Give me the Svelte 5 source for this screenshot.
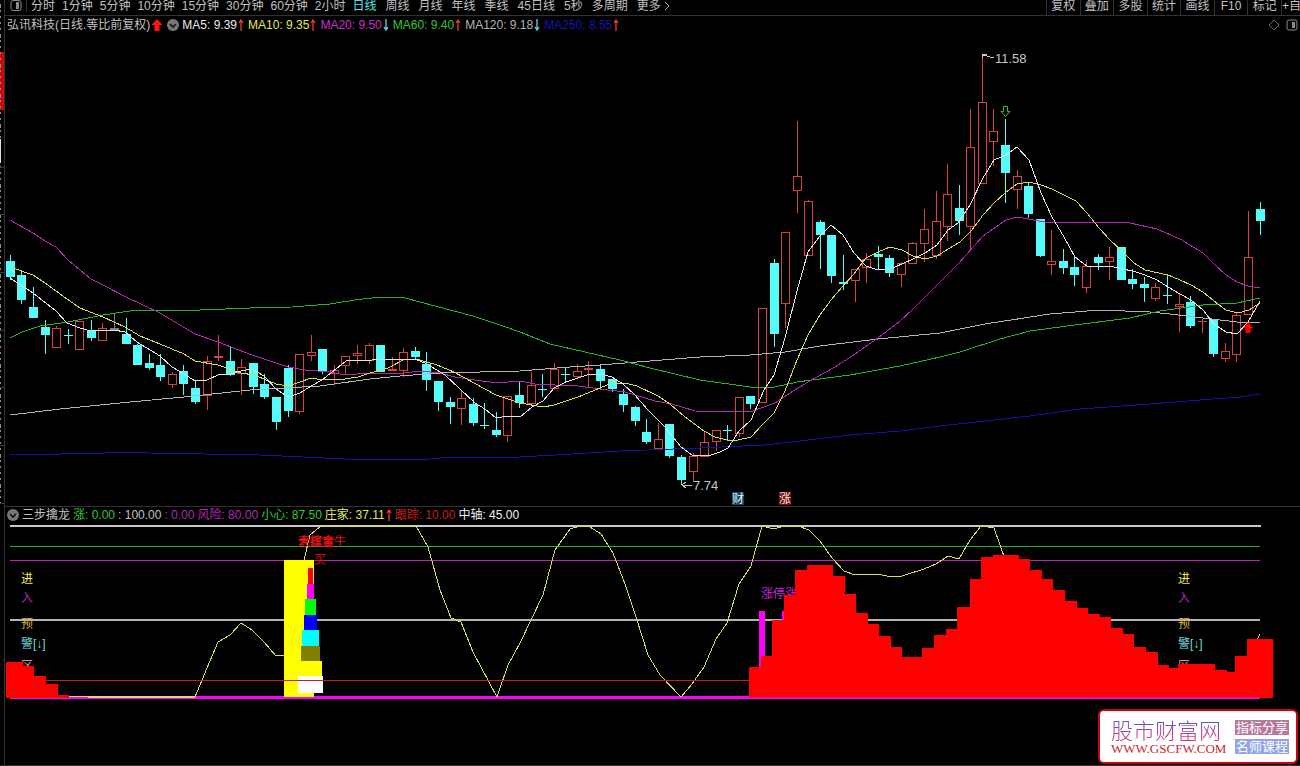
<script lang="ts">
  /** Daily K-line view with moving averages and the 三步擒龙 indicator below it.
   *  All chart values are in the drawing units of the two SVG panes. */

  type Candle = [kind: 'u' | 'd' | 'g', top: number, bottom: number, high: number, low: number];

  const intraday = ['分时', '1分钟', '5分钟', '10分钟', '15分钟', '30分钟', '60分钟', '2小时'];
  const longer = ['日线', '周线', '月线', '年线', '季线', '45日线', '5秒', '多周期', '更多'];
  const tools = ['复权', '叠加', '多股', '统计', '画线', 'F10', '标记', '+自'];

  let period = $state('日线');

  const averages = [
    { label: 'MA5', value: '9.39', color: '#e8e8e8', dir: 'up' },
    { label: 'MA10', value: '9.35', color: '#e6e65a', dir: 'up' },
    { label: 'MA20', value: '9.50', color: '#c832c8', dir: 'down' },
    { label: 'MA60', value: '9.40', color: '#32c832', dir: 'up' },
    { label: 'MA120', value: '9.18', color: '#b4b4b4', dir: 'down' },
    { label: 'MA250', value: '8.55', color: '#1414b4', dir: 'up' },
  ];

  const readings = [
    { text: '涨: 0.00', color: '#32c832', dir: '' },
    { text: ': 100.00', color: '#c0c0c0', dir: '' },
    { text: ': 0.00', color: '#b428b4', dir: '' },
    { text: '风险: 80.00', color: '#b428b4', dir: '' },
    { text: '小心: 87.50', color: '#32c832', dir: '' },
    { text: '庄家: 37.11', color: '#e6e65a', dir: 'up' },
    { text: '跟踪: 10.00', color: '#c81e1e', dir: '' },
    { text: '中轴: 45.00', color: '#f0f0f0', dir: '' },
  ];

  const candles: Candle[] = [
    ['d', 261, 277, 255, 280], ['d', 275, 300, 271, 304], ['d', 307, 318, 287, 318], ['d', 327, 335, 320, 354],
    ['u', 328, 348, 326, 348], ['d', 335, 336, 329, 344], ['u', 321, 350, 321, 350], ['d', 330, 338, 320, 341],
    ['u', 328, 341, 323, 341], ['g', 328, 330, 313, 330], ['d', 334, 344, 318, 344], ['d', 345, 365, 344, 365],
    ['d', 363, 368, 354, 370], ['d', 365, 377, 354, 381], ['u', 374, 385, 372, 388], ['d', 371, 384, 365, 395],
    ['d', 388, 402, 381, 404], ['u', 361, 396, 356, 410], ['u', 356, 358, 335, 361], ['d', 361, 375, 347, 376],
    ['u', 367, 374, 359, 395], ['d', 363, 387, 363, 394], ['d', 384, 397, 374, 399], ['d', 397, 422, 397, 430],
    ['d', 368, 411, 365, 417], ['u', 354, 412, 354, 414], ['u', 352, 356, 335, 361], ['d', 349, 372, 349, 374],
    ['u', 370, 374, 365, 385], ['u', 356, 366, 356, 375], ['u', 353, 356, 345, 364], ['u', 345, 361, 343, 364],
    ['d', 345, 372, 345, 372], ['u', 369, 371, 357, 371], ['u', 352, 371, 348, 377], ['d', 351, 357, 347, 360],
    ['d', 364, 380, 352, 391], ['d', 381, 402, 381, 411], ['d', 402, 407, 397, 424], ['u', 398, 409, 391, 425],
    ['d', 404, 423, 398, 426], ['d', 425, 426, 403, 429], ['d', 430, 435, 412, 437], ['u', 396, 436, 396, 442],
    ['d', 395, 403, 381, 408], ['u', 385, 404, 372, 406], ['d', 389, 390, 374, 397], ['u', 369, 389, 363, 390],
    ['d', 374, 375, 368, 382], ['u', 371, 377, 364, 379], ['u', 368, 370, 361, 387], ['d', 369, 381, 365, 389],
    ['d', 379, 389, 379, 392], ['d', 394, 405, 389, 412], ['d', 407, 421, 406, 426], ['d', 432, 442, 419, 444],
    ['u', 439, 449, 423, 449], ['d', 424, 456, 424, 458], ['d', 457, 480, 455, 485], ['u', 456, 472, 453, 482],
    ['u', 442, 457, 432, 457], ['u', 430, 442, 430, 451], ['d', 430, 431, 425, 441], ['u', 397, 434, 397, 437],
    ['d', 396, 404, 396, 409], ['u', 308, 403, 308, 403], ['d', 263, 334, 259, 347], ['u', 232, 304, 232, 328],
    ['u', 176, 191, 121, 213], ['u', 201, 256, 200, 256], ['d', 222, 235, 220, 269], ['d', 235, 276, 235, 283],
    ['d', 282, 284, 255, 290], ['u', 269, 281, 269, 302], ['u', 259, 268, 253, 283], ['d', 254, 257, 246, 269],
    ['d', 258, 273, 255, 277], ['u', 263, 275, 262, 287], ['u', 243, 264, 242, 264], ['u', 229, 244, 209, 262],
    ['u', 221, 256, 191, 259], ['u', 194, 227, 164, 241], ['d', 208, 221, 185, 235], ['u', 147, 227, 109, 251],
    ['u', 102, 184, 55, 184], ['u', 131, 142, 109, 166], ['d', 145, 173, 119, 203], ['u', 176, 190, 170, 209],
    ['d', 186, 214, 182, 218], ['d', 219, 256, 219, 257], ['u', 261, 265, 230, 275], ['d', 261, 268, 249, 274],
    ['d', 267, 275, 256, 286], ['u', 266, 288, 260, 293], ['d', 257, 263, 254, 270], ['u', 257, 262, 247, 280],
    ['d', 247, 280, 247, 280], ['d', 279, 284, 269, 289], ['d', 284, 288, 277, 302], ['u', 287, 299, 283, 301],
    ['d', 295, 296, 274, 304], ['u', 304, 307, 294, 332], ['d', 302, 326, 296, 328], ['u', 321, 322, 319, 333],
    ['d', 319, 354, 319, 357], ['u', 351, 359, 343, 362], ['u', 315, 355, 313, 362], ['u', 257, 315, 211, 315],
    ['d', 209, 221, 202, 235],
  ];

  const colX = (i: number) => Math.floor(10.3 + 11.572 * i);

  const lines = [
    { color: '#1010b0', pts: '10,454 60,454 105,453 125,452 150,453 260,455 325,458 345,459 430,459 440,458 520,457 555,455 620,451 700,448 765,445 800,441 850,435 900,431 940,426 985,421 1030,416 1080,409 1150,404 1200,400 1240,397 1260,394' },
    { color: '#b4b4b4', pts: '10,415 60,409 130,402 184,397 250,390 320,386 370,379 400,376 440,373 520,371 570,367 600,365 650,361 700,357 750,355 785,352 820,346 878,339 940,333 985,324 1050,314 1100,310 1150,312 1170,314 1203,318 1237,322 1260,323' },
    { color: '#28b428', pts: '10,338 22,332 40,326 68,322 103,315 130,311 150,310 200,310 250,308 292,307 330,304 355,300 380,297 405,298 435,306 473,316 500,325 520,332 550,344 585,352 620,360 650,368 700,380 750,387 775,387 797,382 850,375 900,366 940,357 960,352 1000,339 1030,331 1075,325 1130,318 1160,311 1203,305 1237,303 1260,298' },
    { color: '#b428b4', pts: '10,220 33,233 45,241 56,247 68,260 80,270 91,279 103,285 126,297 160,313 195,334 218,342 252,355 288,367 305,370 330,372 345,375 370,373 395,374 420,371 440,373 455,377 475,380 497,383 520,381 535,384 555,385 578,386 600,389 625,392 655,401 672,404 695,411 750,412 775,403 790,393 808,382 835,367 855,354 878,338 900,321 913,309 930,292 958,264 983,236 1006,220 1017,217 1045,222 1075,222 1130,223 1157,229 1180,239 1203,253 1214,264 1226,275 1237,282 1248,286 1260,288' },
    { color: '#dcdc50', pts: '10,267 33,275 45,283 67,299 80,308 103,317 125,327 140,336 160,344 184,354 195,361 218,365 241,373 254,375 264,379 276,384 288,386 300,382 311,378 323,380 345,379 358,377 370,373 388,368 405,359 420,360 437,365 454,372 474,383 496,395 520,403 543,407 554,405 578,397 600,388 612,383 625,383 637,386 658,396 670,404 685,417 704,431 715,437 727,440 738,440 751,437 762,425 774,413 785,391 797,360 808,335 820,315 831,300 843,286 854,274 866,258 878,252 890,247 902,250 913,256 925,259 937,256 948,249 960,242 972,230 983,215 994,203 1006,192 1017,184 1029,182 1041,185 1052,189 1064,195 1076,201 1087,213 1099,228 1110,240 1122,251 1134,263 1145,270 1168,275 1180,280 1191,285 1203,292 1214,301 1226,310 1238,313 1249,310 1260,303' },
    { color: '#e6e6e6', pts: '10,278 33,293 56,311 67,323 80,328 91,331 103,330 114,330 125,332 137,342 160,356 172,367 184,374 195,381 207,380 218,375 230,374 241,371 252,369 264,376 276,389 288,397 300,393 311,386 322,380 346,361 372,360 405,359 415,359 427,364 445,375 460,389 475,403 485,409 496,418 508,416 520,417 532,407 543,401 554,388 566,382 578,378 590,374 601,374 612,377 623,384 634,394 648,410 665,427 681,447 692,455 708,456 720,452 728,448 739,431 751,420 764,390 774,375 785,338 797,291 808,252 820,236 831,225 843,235 854,253 866,266 878,270 890,269 902,264 913,259 925,253 937,245 948,230 958,223 970,205 983,178 994,160 1006,155 1017,147 1029,160 1041,193 1052,217 1064,237 1075,257 1087,266 1100,267 1110,266 1122,269 1133,271 1145,275 1157,280 1168,287 1180,294 1191,300 1203,310 1214,324 1226,332 1237,334 1248,322 1260,301' },
  ];

  const base = 698;

  // [right edge, top] of every step
  const leftSteps = [[23, 662], [34, 666], [46, 676], [58, 684], [69, 695]];
  const rightSteps = [
    [761, 667], [772, 656], [784, 620], [795, 595], [807, 570], [833, 565], [845, 576], [856, 594], [868, 613],
    [879, 624], [891, 636], [902, 647], [922, 657], [934, 648], [946, 635], [957, 629], [970, 607], [981, 579],
    [993, 557], [1019, 555], [1030, 559], [1042, 570], [1053, 579], [1065, 590], [1077, 601], [1088, 608],
    [1100, 614], [1111, 617], [1123, 628], [1134, 634], [1146, 647], [1158, 652], [1169, 665], [1178, 668],
    [1215, 664], [1227, 670], [1235, 672], [1247, 656], [1273, 639],
  ];

  function stepPath(start: number, steps: number[][]): string {
    let d = `M${start} ${base}`;
    for (const [x, y] of steps) d += `V${y}H${x}`;
    return d + `V${base}Z`;
  }

  const tower = [
    { x: 308, y: 568, w: 5, h: 16, color: '#ff0000' },
    { x: 307, y: 584, w: 7, h: 15, color: '#ff00ff' },
    { x: 305, y: 599, w: 11, h: 16, color: '#00ff00' },
    { x: 304, y: 615, w: 13, h: 15, color: '#0000ff' },
    { x: 302, y: 630, w: 17, h: 16, color: '#00ffff' },
    { x: 301, y: 646, w: 19, h: 15, color: '#808000' },
    { x: 302, y: 661, w: 20, h: 15, color: '#ffff00' },
    { x: 298, y: 676, w: 25, h: 17, color: '#ffffff' },
  ];

  const flow = '69,697 76,696 88,697 195,697 207,668 218,642 230,635 241,623 252,630 264,642 276,656 284,655 296,600 304,560 310,535 321,526 416,526 428,547 440,590 451,618 461,622 473,652 497,697 508,665 520,643 531,620 543,595 555,550 570,529 580,526 590,527 601,534 613,553 625,584 637,620 648,655 660,675 681,697 692,684 704,667 716,639 727,623 739,584 751,566 762,526 774,529 784,526 798,526 809,530 820,541 832,558 844,571 855,575 878,574 891,577 902,576 924,569 936,564 948,556 959,559 970,540 981,526 994,528 1006,562';

  const zoneColumns = [21, 1178];
  const zoneWords = [
    { text: '进', y: 583, color: '#f0f05a' },
    { text: '入', y: 602, color: '#b428b4' },
    { text: '预', y: 628, color: '#dcb450' },
    { text: '警[↓]', y: 648, color: '#6edcdc' },
    { text: '区', y: 670, color: '#dc8c96' },
  ];

  // clipped price labels of the neighbouring window
  const ticks = Array.from({ length: 84 }, (_, i) => ({ y: 4 + i * 6, h: (i * 7) % 5 === 0 ? 4 : 2 }));
  const notches = [167, 214, 272, 330, 387, 445, 503];
</script>

{#snippet trend(dir: string)}
  {#if dir}
    <svg class="trend" viewBox="0 0 6 12" aria-hidden="true">
      {#if dir === 'up'}
        <path d="M3 12V2M1 4L3 1L5 4" stroke="#f03c32" stroke-width="1.3" fill="none" />
      {:else}
        <path d="M3 0V10M1 8L3 11L5 8" stroke="#5adce6" stroke-width="1.3" fill="none" />
      {/if}
    </svg>
  {/if}
{/snippet}

{#snippet fold()}
  <svg viewBox="0 0 12 12" width="12" height="12" aria-hidden="true">
    <circle cx="6" cy="6" r="6" fill="#787878" />
    <path d="M3 5L6 8L9 5" stroke="#111" stroke-width="1.6" fill="none" />
  </svg>
{/snippet}

<div class="terminal">
  <aside class="edge">
    <svg viewBox="0 0 5 766" preserveAspectRatio="xMinYMin slice" shape-rendering="crispEdges" aria-hidden="true">
      <rect x="0" y="52" width="4" height="58" fill="#c80a0a" />
      {#each ticks as t}
        <rect x="0" y={t.y} width="1" height={t.h} fill="#8c8c8c" />
      {/each}
      <rect x="0" y="139" width="1" height="24" fill="#dcdcdc" />
      {#each notches as y}
        <rect x="0" {y} width="4" height="1" fill="#3c3c3c" />
      {/each}
      <rect x="4" y="0" width="1" height="766" fill="#323232" />
    </svg>
  </aside>

  <main>
    <nav class="toolbar">
      <button class="pane-btn" aria-label="侧栏">
        <svg viewBox="0 0 12 12" width="12" height="12">
          <rect x="1" y="0.5" width="10" height="10" rx="2" fill="none" stroke="#8c8c8c" />
          <rect x="6" y="2" width="3" height="7" fill="#8c8c8c" />
        </svg>
      </button>
      <div class="periods intraday">
        {#each intraday as p}
          <button class:active={period === p} onclick={() => (period = p)}>{p}</button>
        {/each}
      </div>
      <div class="periods longer">
        {#each longer as p}
          <button class:active={period === p} onclick={() => (period = p)}>{p}</button>
        {/each}
        <svg class="more" viewBox="0 0 6 10" width="6" height="10" aria-hidden="true">
          <path d="M1 1L5 5L1 9" stroke="#b4b4b4" fill="none" />
        </svg>
      </div>
      <div class="tools">
        {#each tools as t}
          <button>{t}</button>
        {/each}
      </div>
    </nav>

    <header class="info">
      <span class="stock">弘讯科技(日线.等比前复权)</span>
      <svg class="flag" viewBox="0 0 12 12" width="12" height="12" aria-hidden="true">
        <path d="M6 0L11.500 6H8.500V12H3.500V6H0.500Z" fill="#ff1414" />
      </svg>
      <button class="fold" aria-label="折叠">{@render fold()}</button>
      <div class="averages">
        {#each averages as a}
          <span class="reading" style="color: {a.color}">{a.label}: {a.value}{@render trend(a.dir)}</span>
        {/each}
      </div>
      <svg class="corner" viewBox="0 0 30 12" width="30" height="12" aria-hidden="true">
        <path d="M6 1L11 6L6 11L1 6Z" fill="none" stroke="#6e6e6e" />
        <rect x="19" y="1" width="10" height="10" rx="2" fill="none" stroke="#8c8c8c" />
        <rect x="24" y="3" width="3" height="6" fill="#8c8c8c" />
      </svg>
    </header>

    <svg class="pane" viewBox="5 34 1295 472" role="img" aria-label="日线">
      <g shape-rendering="crispEdges">
        {#each candles as [kind, top, bottom, high, low], i}
          {@const x = colX(i)}
          {#if kind === 'u'}
            <g fill="#dc4141">
              <rect {x} y={high} width="1" height={top - high} />
              <rect {x} y={bottom} width="1" height={low - bottom} />
              {#if bottom - top > 2}
                <rect x={x - 3.5} y={top + 0.5} width="8" height={bottom - top - 1} fill="none" stroke="#dc4141" />
              {:else}
                <rect x={x - 4} y={top} width="9" height={bottom - top} />
              {/if}
            </g>
          {:else}
            <g fill={kind === 'd' ? '#54fcfc' : '#828282'}>
              <rect {x} y={high} width="1" height={low - high} />
              <rect x={x - 4} y={top} width="9" height={bottom - top} />
            </g>
          {/if}
        {/each}

        {#each lines as l}
          <polyline points={l.pts} fill="none" stroke={l.color} />
        {/each}

        <path d="M983 55L994 58M982 58V54H987" fill="none" stroke="#c8c8c8" />
        <path d="M682 485H692M686 482L682 485L686 488" fill="none" stroke="#c8c8c8" />
        <rect x="732" y="492" width="12" height="13" fill="#0f4664" />
        <rect x="779" y="492" width="12" height="13" fill="#780a0a" />
      </g>
      <path d="M1003.500 106.500H1007.500V111.500H1010L1005.500 116.500L1001 111.500H1003.500Z" fill="none" stroke="#28c828" />
      <path d="M1248 322L1253 328H1250.500V333H1245.500V328H1243Z" fill="#ff0000" />
      <text x="995" y="63" fill="#c8c8c8" class="price">11.58</text>
      <text x="693" y="490" fill="#c8c8c8" class="price">7.74</text>
      <text x="732" y="503" fill="#e6f0f0">财</text>
      <text x="779" y="503" fill="#f0e6e6">涨</text>
    </svg>

    <header class="sub-info">
      <button class="fold" aria-label="折叠">{@render fold()}</button>
      <span class="name">三步擒龙</span>
      {#each readings as r}
        <span class="reading" style="color: {r.color}">{r.text}{@render trend(r.dir)}</span>
      {/each}
    </header>

    <svg class="pane" viewBox="5 524 1295 241" role="img" aria-label="三步擒龙">
      <text x="761" y="598" fill="#c828dc">涨停涨</text>
      <g shape-rendering="crispEdges">
        <rect x="10" y="525" width="1251" height="2" fill="#c8c8c8" />
        <rect x="10" y="546" width="1250" height="1" fill="#28b428" />
        <rect x="10" y="560" width="1250" height="1" fill="#b428b4" />
        <rect x="10" y="619" width="1250" height="2" fill="#b4b4b4" />
        <rect x="10" y="696" width="1250" height="3" fill="#ff00ff" />
        <rect x="69" y="696" width="127" height="1" fill="#f0c8a0" />

        <polyline points={flow} fill="none" stroke="#dcdc5a" />
        <path d="M1257 640L1260 634" fill="none" stroke="#dcdc5a" />
        <rect x="284" y="560" width="30" height="137" fill="#ffff00" />
        {#each tower as b}
          <rect x={b.x} y={b.y} width={b.w} height={b.h} fill={b.color} />
        {/each}
        <rect x="10" y="680" width="740" height="1" fill="#c81e1e" />
        <rect x="759" y="611" width="6" height="56" fill="#ff00ff" />
        <rect x="782" y="611" width="2" height="10" fill="#ff00ff" />
      </g>
      {#each zoneColumns as x}
        {#each zoneWords as w}
          <text {x} y={w.y} fill={w.color}>{w.text}</text>
        {/each}
      {/each}
      <g shape-rendering="crispEdges" fill="#ff0000">
        <path d={stepPath(6, leftSteps)} />
        <path d={stepPath(749, rightSteps)} />
        <rect x="749" y="697" width="511" height="1" fill="#ff0096" />
      </g>
      <g fill="#e61414">
        <text x="298" y="546">寿辉禽牛</text>
        <text x="298" y="546">大擒金</text>
        <text x="314" y="564">买</text>
      </g>
    </svg>
  </main>

  <a class="brand" href="#home">
    <span class="brand-main">
      <span class="brand-name">股市财富网</span>
      <span class="brand-url">WWW.GSCFW.COM</span>
    </span>
    <span class="brand-tags">
      <span class="tag share">指标分享</span>
      <span class="tag course">名师课程</span>
    </span>
  </a>
</div>

<style>
  :global(body) { background: #000; }

  .terminal { position: relative; display: flex; overflow: hidden; background: #000; color: #c0c0c0; border-bottom: 1px solid #323232; font-family: "Liberation Sans", "Noto Sans CJK SC", sans-serif; font-size: 12px; line-height: 12px; }

  .edge { position: relative; flex: 0 0 5px; }
  .edge svg { position: absolute; inset: 0; width: 5px; height: 100%; }

  main { flex: 1; min-width: 0; }

  button { margin: 0; padding: 0; border: 0; background: none; color: inherit; font: inherit; white-space: nowrap; cursor: pointer; }

  .toolbar { display: flex; height: 15px; overflow: hidden; border-bottom: 1px solid #323232; }
  .toolbar button { height: 12px; }
  .pane-btn { flex: 0 0 22px; display: flex; justify-content: center; border-right: 1px solid #323232; }
  .periods { display: flex; }
  .intraday { gap: 7px; padding: 0 7px 0 4px; }
  .longer { flex: 1; gap: 9px; }
  .periods .active { color: #54e6e6; }
  .more { margin: 1px 0 0 -6px; }
  .tools { display: grid; grid-template-columns: repeat(7, 1fr) 19px; width: 254px; }
  .tools button { height: 15px; padding-bottom: 3px; overflow: hidden; border-left: 1px solid #323232; }

  .info { display: flex; align-items: center; height: 18px; padding: 0 2px; }
  .flag { margin: 0 4px 0 1px; }
  .fold { display: flex; flex: none; }
  .averages { display: flex; flex: 1; gap: 4px; margin-left: 3px; }
  .reading { display: flex; align-items: center; white-space: pre; }
  .trend { width: 6px; height: 12px; margin-left: 1px; }

  .pane { display: block; width: 100%; height: auto; }
  .pane text { font-size: 12px; }
  .pane .price { font-size: 13px; }

  .sub-info { display: flex; align-items: center; gap: 3px; height: 15px; padding: 0 2px 2px; border-top: 1px solid #323232; }

  .brand { position: absolute; right: 2px; bottom: 1px; display: flex; align-items: center; justify-content: space-between; box-sizing: border-box; width: 200px; height: 55px; padding: 0 7px 0 11px; border: 2px solid #d2000f; border-radius: 6px; background: #fff; text-decoration: none; }
  .brand-main { display: flex; flex-direction: column; }
  .brand-name { background: linear-gradient(#6450c8 20%, #c83c78 80%); background-clip: text; color: transparent; font-family: "Noto Sans CJK SC", sans-serif; font-size: 22px; font-weight: 300; line-height: 24px; }
  .brand-url { color: #c8283c; font-family: "Liberation Serif", serif; font-size: 13px; line-height: 16px; }
  .brand-tags { display: flex; flex-direction: column; gap: 4px; }
  .tag { padding: 0 1px; color: #fff; font-family: "Liberation Serif", "Noto Sans CJK SC", serif; font-size: 13px; line-height: 15px; }
  .share { background: #b9789b; }
  .course { background: #91a5e6; }
</style>
